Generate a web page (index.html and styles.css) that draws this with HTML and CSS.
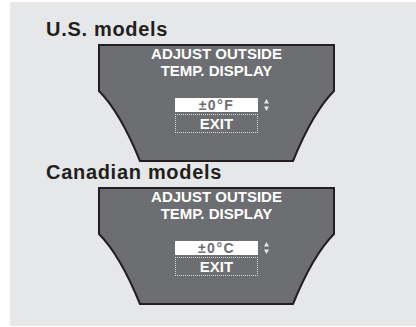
FILE: index.html
```html
<!DOCTYPE html>
<html lang="en">
<head>
    <meta charset="UTF-8">
    <title>Adjust Outside Temp. Display</title>
    <link rel="stylesheet" href="styles.css">
</head>
<body>
    <div class="panel">
        <h2 class="model-title">U.S. models</h2>
        <div class="display">
            <svg class="display-frame" viewBox="0 0 237 118" width="237" height="118">
                <path d="M1 1 H236 V47 Q215 68 195 117 H42 Q22 68 1 47 Z" fill="#6d6e71" stroke="#231f20" stroke-width="2"/>
            </svg>
            <div class="display-text">ADJUST OUTSIDE<br>TEMP. DISPLAY</div>
            <div class="value-row">
                <div class="value-box">±0°F</div>
                <svg class="arrows" viewBox="0 0 5 14" width="5" height="14">
                    <path d="M2.5 1 L5 5.5 H0 Z" fill="#e6e7e8"/>
                    <path d="M0 8.5 H5 L2.5 13 Z" fill="#e6e7e8"/>
                </svg>
            </div>
            <div class="exit-box">EXIT</div>
        </div>

        <h2 class="model-title">Canadian models</h2>
        <div class="display">
            <svg class="display-frame" viewBox="0 0 237 118" width="237" height="118">
                <path d="M1 1 H236 V47 Q215 68 195 117 H42 Q22 68 1 47 Z" fill="#6d6e71" stroke="#231f20" stroke-width="2"/>
            </svg>
            <div class="display-text">ADJUST OUTSIDE<br>TEMP. DISPLAY</div>
            <div class="value-row">
                <div class="value-box">±0°C</div>
                <svg class="arrows" viewBox="0 0 5 14" width="5" height="14">
                    <path d="M2.5 1 L5 5.5 H0 Z" fill="#e6e7e8"/>
                    <path d="M0 8.5 H5 L2.5 13 Z" fill="#e6e7e8"/>
                </svg>
            </div>
            <div class="exit-box">EXIT</div>
        </div>
    </div>
</body>
</html>
```

FILE: styles.css
```css
body {
    margin: 0;
    padding: 0;
    background-color: #ffffff;
    font-family: "Liberation Sans", Arial, sans-serif;
}
.panel {
    margin: 2px 0 0 10px;
    height: 324px;
    box-sizing: border-box;
    padding: 17px 0 0 36px;
    background-color: #e6e7e8;
}
.model-title {
    margin: 0;
    font-size: 20px;
    line-height: 21px;
    font-weight: bold;
    letter-spacing: 0.7px;
    color: #231f20;
}
.display {
    position: relative;
    width: 237px;
    height: 118px;
    margin: 4px 0 0 52px;
    display: flex;
    flex-direction: column;
    align-items: center;
}
.display-frame {
    position: absolute;
    left: 0;
    top: 0;
}
.display-text {
    position: relative;
    margin-top: 1px;
    color: #ffffff;
    font-size: 15px;
    line-height: 17px;
    font-weight: bold;
    text-align: center;
}
.value-row {
    position: relative;
    margin-top: 19px;
    display: flex;
    align-items: center;
}
.value-box {
    width: 83px;
    height: 14px;
    background-color: #ffffff;
    color: #6d6e71;
    font-size: 14px;
    line-height: 14px;
    font-weight: bold;
    letter-spacing: 1.5px;
    text-align: center;
}
.arrows {
    position: absolute;
    left: 89px;
    top: 0;
}
.exit-box {
    position: relative;
    margin-top: 2px;
    width: 81px;
    height: 17px;
    border: 1px dotted #d8d9da;
    color: #ffffff;
    font-size: 15px;
    line-height: 17px;
    font-weight: bold;
    text-align: center;
}
```
